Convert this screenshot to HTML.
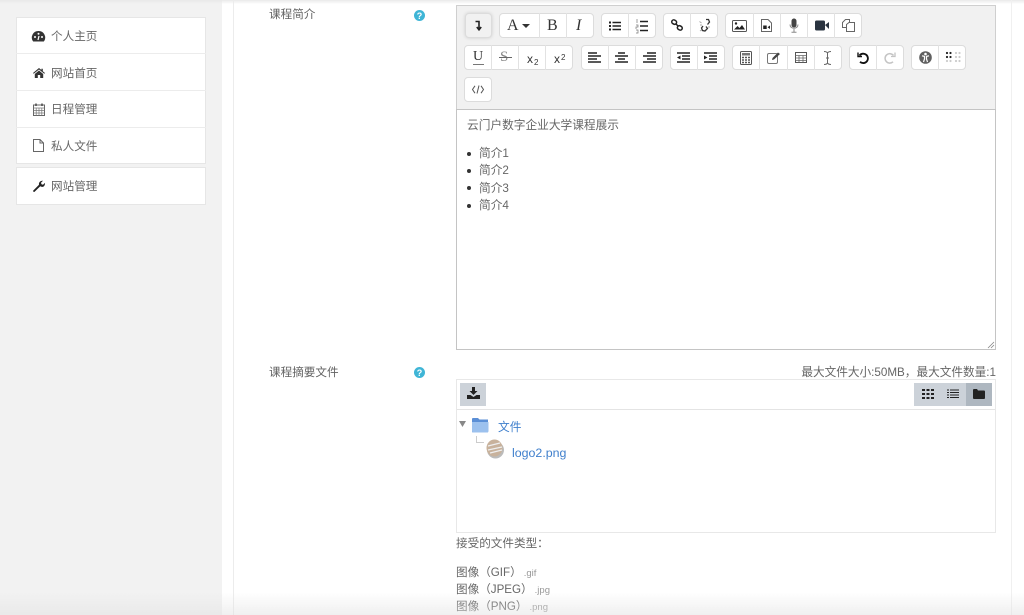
<!DOCTYPE html>
<html><head><meta charset="utf-8"><style>
html,body{margin:0;padding:0;width:1024px;height:615px;overflow:hidden;background:#fff}
body{position:relative;font-family:"Liberation Sans","Noto Sans CJK SC",sans-serif;font-size:11.7px;color:#5a5a5a}
#w{position:absolute;left:0;top:0;width:1024px;height:615px;filter:blur(.35px)}
.a{position:absolute;white-space:nowrap}
.side{position:absolute;left:0;top:0;width:222px;height:615px;background:#f2f2f2}
.card{position:absolute;left:16px;width:188px;background:#fff;border:1px solid #e6e6e6;box-sizing:content-box}
.it{position:absolute;left:51px;font-size:11.6px;color:#666;line-height:16px}
.sep{position:absolute;left:16px;width:190px;height:1px;background:#ececec}
.g{position:absolute;height:25px;background:#fff;border:1px solid #dcdcdc;border-radius:4px;box-sizing:border-box}
.d{position:absolute;width:1px;height:25px;background:#e2e2e2}
svg{position:absolute;overflow:visible}
.l{color:#626262;font-size:11.6px}
</style></head><body><div id="w">
<div class="side"></div>
<div class="a" style="left:0;top:0;width:1024px;height:4px;background:linear-gradient(#e9e9e9,rgba(250,250,250,0))"></div>
<div class="a" style="left:233px;top:0;width:1px;height:615px;background:#ececec"></div>
<div class="a" style="left:1011px;top:0;width:1px;height:615px;background:#f0f0f0"></div>

<div class="card" style="top:17px;height:145px"></div>
<div class="sep" style="top:53px"></div><div class="sep" style="top:90px"></div><div class="sep" style="top:127px"></div>
<div class="card" style="top:167px;height:36px"></div>
<div class="it" style="top:29px">个人主页</div>
<div class="it" style="top:66px">网站首页</div>
<div class="it" style="top:102px">日程管理</div>
<div class="it" style="top:139px">私人文件</div>
<div class="it" style="top:179px">网站管理</div>

<svg style="left:32px;top:31px" width="13" height="11" viewBox="0 0 13 11"><path d="M6.500 0A6.500 6.500 0 0 0 1.200 10.500h10.600A6.500 6.500 0 0 0 6.500 0z" fill="#333"/><circle cx="3" cy="6" r="1" fill="#fff"/><circle cx="6.500" cy="2.800" r="1" fill="#fff"/><circle cx="10" cy="6" r="1" fill="#fff"/><path d="M6 9l1-4" stroke="#fff" stroke-width="1.200"/></svg>
<svg style="left:33px;top:68px" width="12" height="10" viewBox="0 0 12 10"><path d="M6 0L0 5l.7.8L6 1.500l5.300 4.300.7-.8L9.800 3.200V.7H8.400V2z" fill="#333"/><path d="M1.800 6L6 2.500 10.200 6v4H7.200V7H4.800v3h-3z" fill="#333"/></svg>
<svg style="left:33px;top:103px" width="12" height="13" viewBox="0 0 12 13"><rect x=".5" y="2" width="11" height="10.500" fill="none" stroke="#666"/><path d="M.5 5h11M.5 7.500h11M.5 10h11M3.200 5v7.500M6 5v7.500M8.800 5v7.500" stroke="#777" stroke-width=".7"/><path d="M3 .5v2.500M9 .5v2.500" stroke="#444" stroke-width="1.400"/></svg>
<svg style="left:33px;top:139px" width="11" height="13" viewBox="0 0 11 13"><path d="M.5.500h6.500l3.500 3.500v8.500H.5zM7 .500V4h3.500" fill="none" stroke="#666"/></svg>
<svg style="left:33px;top:180px" width="12" height="12" viewBox="0 0 12 12"><path d="M.3 10.500L6 4.800C5.500 2.500 7.500.3 10 .8L8 2.800l.5 1.500 1.500.5 1.900-1.900C12.300 6 10 8 7.300 6.300L1.600 11.800c-.8.600-2-.5-1.300-1.300z" fill="#222"/></svg>

<div class="a l" style="left:269px;top:6px">课程简介</div>
<div class="a l" style="left:269px;top:364px">课程摘要文件</div>
<svg style="left:414px;top:10px" width="11" height="11" viewBox="0 0 11 11"><circle cx="5.500" cy="5.500" r="5.500" fill="#3fb5d6"/><text x="5.500" y="8.800" font-size="9" font-weight="bold" fill="#fff" text-anchor="middle" font-family="Liberation Sans">?</text></svg>
<svg style="left:414px;top:367px" width="11" height="11" viewBox="0 0 11 11"><circle cx="5.500" cy="5.500" r="5.500" fill="#3fb5d6"/><text x="5.500" y="8.800" font-size="9" font-weight="bold" fill="#fff" text-anchor="middle" font-family="Liberation Sans">?</text></svg>

<!-- toolbar -->
<div class="a" style="left:456px;top:5px;width:540px;height:105px;box-sizing:border-box;background:#f1f1f1;border:1px solid #cfcfcf"></div>
<div class="g" style="left:465px;top:13px;width:27px;background:#f1f1f1;box-shadow:0 0 3px #ccc"></div>
<div class="g" style="left:499px;top:13px;width:95px"></div><div class="d" style="left:539px;top:13px"></div><div class="d" style="left:566px;top:13px"></div>
<div class="g" style="left:601px;top:13px;width:55px"></div><div class="d" style="left:628px;top:13px"></div>
<div class="g" style="left:663px;top:13px;width:55px"></div><div class="d" style="left:690px;top:13px"></div>
<div class="g" style="left:725px;top:13px;width:137px"></div><div class="d" style="left:753px;top:13px"></div><div class="d" style="left:780px;top:13px"></div><div class="d" style="left:807px;top:13px"></div><div class="d" style="left:834px;top:13px"></div>

<div class="g" style="left:464px;top:45px;width:109px"></div><div class="d" style="left:491px;top:45px"></div><div class="d" style="left:518px;top:45px"></div><div class="d" style="left:545px;top:45px"></div>
<div class="g" style="left:581px;top:45px;width:82px"></div><div class="d" style="left:608px;top:45px"></div><div class="d" style="left:635px;top:45px"></div>
<div class="g" style="left:670px;top:45px;width:55px"></div><div class="d" style="left:697px;top:45px"></div>
<div class="g" style="left:732px;top:45px;width:110px"></div><div class="d" style="left:759px;top:45px"></div><div class="d" style="left:787px;top:45px"></div><div class="d" style="left:814px;top:45px"></div>
<div class="g" style="left:849px;top:45px;width:55px"></div><div class="d" style="left:876px;top:45px"></div>
<div class="g" style="left:911px;top:45px;width:55px"></div><div class="d" style="left:938px;top:45px"></div>
<div class="g" style="left:464px;top:77px;width:28px"></div>

<!-- row 1 icons -->
<svg style="left:474px;top:20px" width="9" height="11" viewBox="0 0 9 11"><path d="M1.500 1.500H5V9M2.800 7L5 9.800 7.200 7" fill="none" stroke="#222" stroke-width="1.600"/></svg>
<div class="a" style="left:507px;top:17px;font:16px 'Liberation Serif';color:#333">A</div>
<svg style="left:522px;top:24px" width="8" height="4"><path d="M0 0h8L4 4z" fill="#333"/></svg>
<div class="a" style="left:547px;top:17px;font:16px 'Liberation Serif';color:#333">B</div>
<div class="a" style="left:576px;top:17px;font:italic 16px 'Liberation Serif';color:#333">I</div>
<svg style="left:609px;top:21px" width="12" height="10"><path d="M3.500 1.500H12M3.500 5H12M3.500 8.500H12" stroke="#222" stroke-width="1.600"/><path d="M0 1.500h2M0 5h2M0 8.500h2" stroke="#222" stroke-width="1.900"/></svg>
<svg style="left:636px;top:19px" width="12" height="14"><path d="M4 2.500H12M4 7H12M4 11.500H12" stroke="#222" stroke-width="1.500"/><path d="M1 0v4M0 6h2v2H0v2M0 11h2v3H0" stroke="#777" stroke-width=".7" fill="none"/></svg>
<svg style="left:671px;top:19px" width="12" height="12" fill="none" stroke="#222" stroke-width="1.500"><rect x=".7" y="1" width="5" height="4" rx="2" transform="rotate(30 3 3)"/><rect x="6.300" y="7" width="5" height="4" rx="2" transform="rotate(30 9 9)"/><path d="M4.500 4.500l3 3"/></svg>
<svg style="left:698px;top:18px" width="13" height="15" fill="none" stroke="#333" stroke-width="1.300"><path d="M8 1.500h2.500l1 2.500-2 2.500M5 8l-1.500 2 1 2.500 2.500.5 2.500-2.500-1.500-2"/><path d="M1.500 3.500l2 1.500M2 7h2M10 9h2M3.500 12l-1.500 1" stroke="#aaa" stroke-width="1"/></svg>
<svg style="left:732px;top:20px" width="15" height="12"><rect x=".5" y=".5" width="14" height="11" rx="1" fill="#fff" stroke="#555"/><path d="M2 9.500L5.500 6 7.500 8 10 5l3 4.500z" fill="#222"/><circle cx="4" cy="3.500" r="1.200" fill="#222"/></svg>
<svg style="left:761px;top:19px" width="11" height="13"><path d="M.5.500h6.500l3.500 3.500v8.500H.5z" fill="#fff" stroke="#666"/><rect x="2.200" y="6.500" width="3.500" height="3.500" fill="#222"/><path d="M6.500 8.200L9 6.500v3.500z" fill="#222"/></svg>
<svg style="left:789px;top:18px" width="10" height="15"><rect x="2.500" y=".5" width="5" height="9" rx="2.500" fill="#444"/><path d="M1 6.500c0 5 8 5 8 0M5 11v3M2.500 14.300h5" fill="none" stroke="#888"/></svg>
<svg style="left:815px;top:20px" width="14" height="11"><rect x="0" y=".5" width="10" height="10" rx="1.500" fill="#2a3440"/><path d="M10 5l4-3v7z" fill="#2a3440"/></svg>
<svg style="left:842px;top:19px" width="13" height="13" fill="#fff" stroke="#666"><path d="M.5 3.500L3.500.5h4v8h-7z"/><path d="M4.500 5.500l2.500-2h5.500v9h-8z"/></svg>

<!-- row 2 icons -->
<div class="a" style="left:473px;top:49px;font:14px 'Liberation Serif';color:#333">U</div><div class="a" style="left:473px;top:64px;width:11px;height:1px;background:#777"></div>
<div class="a" style="left:500px;top:49px;font:15px 'Liberation Serif';color:#888">S</div><div class="a" style="left:499px;top:57px;width:13px;height:1px;background:#666"></div>
<div class="a" style="left:527px;top:52px;font:12px 'Liberation Sans';color:#333">x<span style="font-size:8px;position:relative;top:2px;left:1px">2</span></div>
<div class="a" style="left:554px;top:52px;font:12px 'Liberation Sans';color:#333">x<span style="font-size:8px;position:relative;top:-3px;left:1px">2</span></div>

<svg style="left:588px;top:52px" width="13" height="11"><path d="M0 1h9M0 4h13M0 7h9M0 10h13" stroke="#222" stroke-width="1.500"/></svg>
<svg style="left:615px;top:52px" width="13" height="11"><path d="M3 1h7M0 4h13M3 7h7M0 10h13" stroke="#222" stroke-width="1.500"/></svg>
<svg style="left:643px;top:52px" width="13" height="11"><path d="M4 1h9M0 4h13M4 7h9M0 10h13" stroke="#222" stroke-width="1.500"/></svg>
<svg style="left:677px;top:52px" width="13" height="11"><path d="M0 1h13M5 4h8M5 7h8M0 10h13" stroke="#222" stroke-width="1.500"/><path d="M3.500 3.500v4L0 5.500z" fill="#222"/></svg>
<svg style="left:704px;top:52px" width="13" height="11"><path d="M0 1h13M5 4h8M5 7h8M0 10h13" stroke="#222" stroke-width="1.500"/><path d="M0 3.500v4l3.500-2z" fill="#222"/></svg>
<svg style="left:740px;top:51px" width="12" height="14"><rect x=".5" y=".5" width="11" height="13" rx="1" fill="#fff" stroke="#555"/><rect x="2" y="2" width="8" height="2.500" fill="#777"/><path d="M2 6.500h8M2 9h8M2 11.500h8" stroke="#555" stroke-width="1.400" stroke-dasharray="2 1"/></svg>
<svg style="left:767px;top:51px" width="14" height="13"><rect x=".5" y="2.500" width="10" height="10" rx="1.500" fill="#fff" stroke="#777"/><path d="M5 9l.5-2L11 1.500l2 1.500L7 8.500z" fill="#444"/></svg>
<svg style="left:795px;top:52px" width="12" height="11"><rect x=".5" y=".5" width="11" height="10" fill="#fff" stroke="#555"/><path d="M.5 3.500h11M.5 6h11M.5 8.500h11M4 3.500v7M8 3.500v7" stroke="#666" stroke-width=".8"/></svg>
<svg style="left:823px;top:51px" width="9" height="14" fill="none" stroke="#666"><path d="M1 .5c2 0 3 .5 3.500 1.500C5 1 6 .5 8 .5M4.500 2v10M1 13.500c2 0 3-.5 3.500-1.500.5 1 1.500 1.500 3.500 1.500M3 7h3"/></svg>
<svg style="left:857px;top:52px" width="12" height="12" fill="none" stroke="#111" stroke-width="1.800"><path d="M2.500 3.500A4.700 4.700 0 1 1 3 9.800"/><path d="M1 .5v4h4" stroke-width="1.400"/></svg>
<svg style="left:884px;top:52px" width="12" height="12" fill="none" stroke="#c4c4c4" stroke-width="1.500"><path d="M9.500 3.500A4.700 4.700 0 1 0 9 9.800"/><path d="M11 .5v4H7" stroke-width="1.300"/></svg>
<svg style="left:919px;top:51px" width="13" height="13"><circle cx="6.500" cy="6.500" r="6.300" fill="#606060"/><circle cx="6.500" cy="3" r="1.300" fill="#fff"/><path d="M3 4.800l2.500.6v2.600L4.500 11M10 4.800l-2.500.6v2.600L8.500 11" stroke="#fff" stroke-width="1.200" fill="none"/></svg>
<svg style="left:946px;top:52px" width="15" height="11"><g fill="#222"><circle cx="1" cy="1" r="1.100"/><circle cx="4.500" cy="1" r="1.100"/><circle cx="1" cy="5" r="1.100"/><circle cx="4.500" cy="5" r="1.100"/></g><g fill="#ccc"><circle cx="1" cy="9" r="1.100"/><circle cx="4.500" cy="9" r="1.100"/><circle cx="10" cy="1" r="1.100"/><circle cx="13.500" cy="1" r="1.100"/><circle cx="10" cy="5" r="1.100"/><circle cx="13.500" cy="5" r="1.100"/><circle cx="10" cy="9" r="1.100"/><circle cx="13.500" cy="9" r="1.100"/></g></svg>
<svg style="left:472px;top:85px" width="12" height="9" fill="none" stroke="#555"><path d="M3 .8L.5 4.500 3 8.200M9 .8l2.500 3.700L9 8.200M7 .5L5 8.500"/></svg>

<!-- editor -->
<div class="a" style="left:456px;top:109px;width:540px;height:241px;box-sizing:border-box;background:#fff;border:1px solid #c4c4c4"></div>
<div class="a" style="left:467px;top:116px;color:#666;font-size:11.7px">云门户数字企业大学课程展示</div>
<div class="a" style="left:479px;top:145px;color:#666;font-size:11.7px;line-height:17.300px">简介1<br>简介2<br>简介3<br>简介4</div>
<div class="a" style="left:467px;top:152px;width:4px;height:4px;border-radius:2px;background:#333"></div>
<div class="a" style="left:467px;top:169px;width:4px;height:4px;border-radius:2px;background:#333"></div>
<div class="a" style="left:467px;top:186px;width:4px;height:4px;border-radius:2px;background:#333"></div>
<div class="a" style="left:467px;top:204px;width:4px;height:4px;border-radius:2px;background:#333"></div>
<svg style="left:987px;top:341px" width="8" height="8" stroke="#888" stroke-width=".8"><path d="M7 1L1 7M7 4L4 7"/></svg>

<!-- file manager -->
<div class="a" style="right:28px;top:363px;color:#666;font-size:11.65px">最大文件大小:50MB，最大文件数量:1</div>
<div class="a" style="left:456px;top:379px;width:540px;height:154px;box-sizing:border-box;border:1px solid #e8e8e8"></div>
<div class="a" style="left:457px;top:409px;width:538px;height:1px;background:#e4e4e4"></div>
<div class="a" style="left:460px;top:383px;width:26px;height:23px;background:#ccd2d9"></div>
<svg style="left:467px;top:387px" width="13" height="13" fill="#222"><path d="M5 0h3v4h2.500L6.500 8 2.500 4H5z"/><path d="M0 8h3.500l3 2 3-2H13v4H0z"/></svg>
<div class="a" style="left:914px;top:383px;width:52px;height:23px;background:#ccd2d9"></div>
<div class="a" style="left:966px;top:383px;width:26px;height:23px;background:#aeb7c0"></div>
<svg style="left:922px;top:389px" width="12" height="10" fill="#222"><path d="M0 0h3v2H0zM4.500 0h3v2h-3zM9 0h3v2H9zM0 4h3v2H0zM4.500 4h3v2h-3zM9 4h3v2H9zM0 8h3v2H0zM4.500 8h3v2h-3zM9 8h3v2H9z"/></svg>
<svg style="left:947px;top:389px" width="12" height="10"><path d="M3 1h9M3 3.500h9M3 6h9M3 8.500h9" stroke="#222"/><path d="M0 1h2M0 3.500h2M0 6h2M0 8.500h2" stroke="#222"/></svg>
<svg style="left:973px;top:389px" width="12" height="10" fill="#222"><path d="M0 1a1 1 0 0 1 1-1h3l1 1.500h6a1 1 0 0 1 1 1V9a1 1 0 0 1-1 1H1a1 1 0 0 1-1-1z"/></svg>

<svg style="left:459px;top:421px" width="7" height="6"><path d="M0 0h7L3.500 6z" fill="#888"/></svg>
<svg style="left:471px;top:417px" width="18" height="16"><path d="M1 2a1 1 0 0 1 1-1h5l1.500 1.500H17v12a1 1 0 0 1-1 1H2a1 1 0 0 1-1-1z" fill="#5b8fd6"/><path d="M1 5h16.500v9a1.500 1.500 0 0 1-1.500 1.500H2.500A1.500 1.500 0 0 1 1 14z" fill="#9cc1ee"/></svg>
<div class="a" style="left:498px;top:418px;color:#3f7fcc;font-size:11.7px">文件</div>
<svg style="left:476px;top:436px" width="8" height="8" fill="none" stroke="#ccc"><path d="M.5 0v6.500H8"/></svg>
<svg style="left:486px;top:439px" width="19" height="20"><ellipse cx="9.500" cy="11" rx="8.500" ry="8.500" fill="#bbb"/><ellipse cx="8.500" cy="9" rx="8" ry="8.500" fill="#c8b29c"/><path d="M2 7l12-3M2 11l14-3M4 14l12-3" stroke="#eee" stroke-width="1.300"/></svg>
<div class="a" style="left:512px;top:446px;color:#3f7fcc;font-size:12.4px">logo2.png</div>

<div class="a" style="left:456px;top:535px;color:#666;font-size:11.6px">接受的文件类型：</div>
<div class="a" style="left:456px;top:564px;color:#666;font-size:11.6px">图像（GIF）<span style="font-size:9.5px;color:#999;margin-left:2px">.gif</span></div>
<div class="a" style="left:456px;top:581px;color:#666;font-size:11.6px">图像（JPEG）<span style="font-size:9.5px;color:#999;margin-left:2px">.jpg</span></div>
<div class="a" style="left:456px;top:598px;color:#666;font-size:11.6px">图像（PNG）<span style="font-size:9.5px;color:#999;margin-left:2px">.png</span></div>
<div class="a" style="left:0;top:592px;width:1024px;height:23px;background:linear-gradient(rgba(225,225,225,0),rgba(225,225,225,.5))"></div>
</div></body></html>
